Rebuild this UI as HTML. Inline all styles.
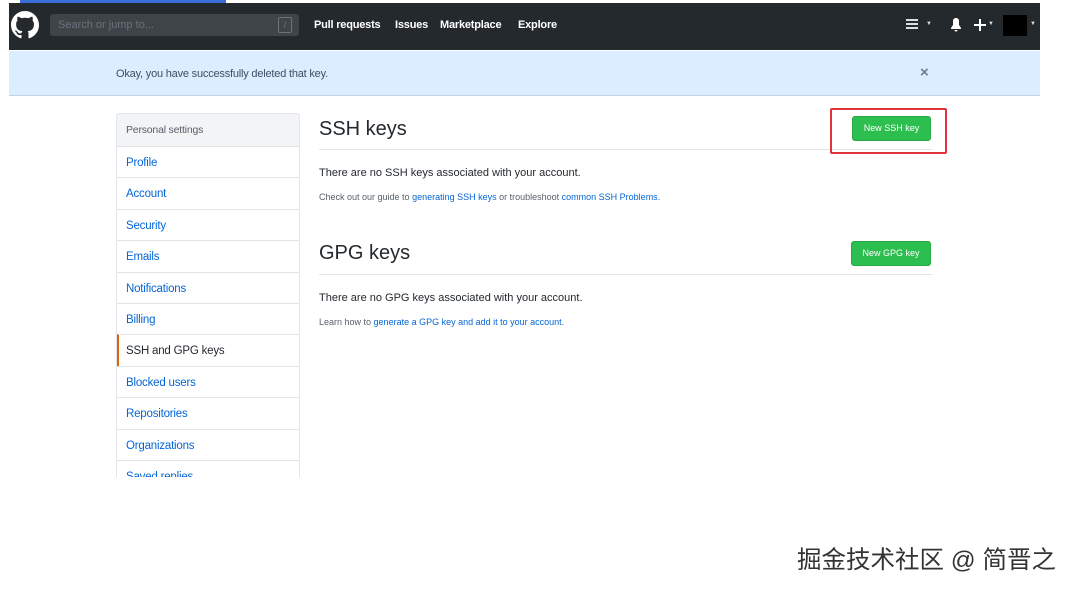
<!DOCTYPE html>
<html><head><meta charset="utf-8"><style>
*{margin:0;padding:0;box-sizing:border-box}
body{width:1076px;height:590px;background:#fff;position:relative;overflow:hidden;font-family:"Liberation Sans",sans-serif;color:#24292e}
.a{position:absolute}
.hdr{left:9px;top:3px;width:1031px;height:47px;background:#24292e}
.nav{color:#fff;font-size:11px;font-weight:bold;top:19px;letter-spacing:-0.2px}
.flash{left:9px;top:51px;width:1031px;height:45px;background:#dbedff;border-bottom:1px solid #c0d3eb}
.side{left:116px;top:113px;width:184px;height:364px;border:1px solid #e1e4e8;border-bottom:none;overflow:hidden;border-radius:3px 3px 0 0}
.side div{height:31.4px;border-top:1px solid #e1e4e8;padding:10px 0 0 9px;font-size:11.5px;color:#0366d6;letter-spacing:-0.2px}
.side .h{background:#f3f4f6;border-top:none;color:#586069;font-size:10.5px;padding-top:10px;height:32px}
.side .s{color:#24292e;border-left:2px solid #e36209;padding-left:7px}
h2{position:absolute;font-weight:normal;font-size:20px;color:#24292e}
.line{position:absolute;left:319px;width:613px;height:1px;background:#e1e4e8}
.t{position:absolute;font-size:11px;color:#24292e}
.sm{position:absolute;font-size:9px;color:#586069}
.sm b{font-weight:normal;color:#0366d6}
.btn{position:absolute;background:#2cbe4e;color:#fff;font-size:9px;border-radius:3px;text-align:center;line-height:23px;border:1px solid #28a745}
</style></head><body>
<div class="a" style="left:20px;top:0;width:206px;height:3px;background:#3a6dd8"></div>
<div class="a hdr"></div>
<svg class="a" style="left:11px;top:11px" width="28" height="28" viewBox="0 0 16 16"><path fill="#fff" d="M8 0C3.58 0 0 3.58 0 8c0 3.54 2.29 6.53 5.47 7.59.4.07.55-.17.55-.38 0-.19-.01-.82-.01-1.49-2.01.37-2.53-.49-2.69-.94-.09-.23-.48-.94-.82-1.13-.28-.15-.68-.52-.01-.53.63-.01 1.080.58 1.23.82.72 1.21 1.87.87 2.33.66.07-.52.28-.87.51-1.07-1.78-.2-3.64-.89-3.64-3.95 0-.87.31-1.59.82-2.15-.08-.2-.36-1.02.08-2.12 0 0 .67-.21 2.2.82.64-.18 1.32-.27 2-.27.68 0 1.36.09 2 .27 1.53-1.04 2.2-.82 2.2-.82.44 1.1.16 1.92.08 2.12.51.56.82 1.27.82 2.15 0 3.07-1.87 3.75-3.65 3.95.29.25.54.73.54 1.48 0 1.07-.01 1.93-.01 2.2 0 .21.15.46.55.38A8.013 8.013 0 0016 8c0-4.42-3.58-8-8-8z"/></svg>
<div class="a" style="left:50px;top:14px;width:249px;height:22px;background:#3f4448;border-radius:3px"></div>
<div class="a" style="left:58px;top:19px;font-size:11px;color:#6a737d">Search or jump to...</div>
<div class="a" style="left:278px;top:17px;width:14px;height:16px;border:1px solid #6a737d;border-radius:2px;font-size:9px;color:#6a737d;text-align:center;line-height:14px">/</div>
<div class="a nav" style="left:314px">Pull requests</div>
<div class="a nav" style="left:395px">Issues</div>
<div class="a nav" style="left:440px">Marketplace</div>
<div class="a nav" style="left:518px">Explore</div>
<div class="a" style="left:906px;top:19px;width:12px;height:10px;border-top:2px solid #ddd;border-bottom:2px solid #ddd"></div>
<div class="a" style="left:906px;top:23px;width:12px;height:2px;background:#ddd"></div>
<div class="a" style="left:926px;top:21px;color:#ddd;font-size:6px">▼</div>
<svg class="a" style="left:950px;top:18px" width="12" height="14" viewBox="0 0 12 14"><path fill="#fff" d="M6 0C4.5 0 3 1 3 3v4L1 10v1h10v-1L9 7V3C9 1 7.5 0 6 0zM4.5 12a1.5 1.5 0 003 0z"/></svg>
<svg class="a" style="left:974px;top:19px" width="12" height="12" viewBox="0 0 12 12"><path fill="#fff" d="M5 0h2v5h5v2H7v5H5V7H0V5h5z"/></svg>
<div class="a" style="left:988px;top:21px;color:#ddd;font-size:6px">▼</div>
<div class="a" style="left:1003px;top:15px;width:24px;height:21px;background:#000"></div>
<div class="a" style="left:1030px;top:21px;color:#ddd;font-size:6px">▼</div>
<div class="a flash"></div>
<div class="a" style="left:116px;top:68px;font-size:11px;color:#3d4f66;letter-spacing:-0.2px">Okay, you have successfully deleted that key.</div>
<div class="a" style="left:920px;top:64px;font-size:15px;color:#6a7c92;font-weight:bold">×</div>
<div class="a side">
<div class="h">Personal settings</div>
<div>Profile</div><div>Account</div><div>Security</div><div>Emails</div><div>Notifications</div><div>Billing</div>
<div class="s">SSH and GPG keys</div>
<div>Blocked users</div><div>Repositories</div><div>Organizations</div><div>Saved replies</div>
</div>
<h2 style="left:319px;top:118px">SSH keys</h2>
<div class="line" style="top:149px"></div>
<div class="t" style="left:319px;top:167px">There are no SSH keys associated with your account.</div>
<div class="sm" style="left:319px;top:192px">Check out our guide to <b>generating SSH keys</b> or troubleshoot <b>common SSH Problems</b>.</div>
<div class="a" style="left:830px;top:108px;width:117px;height:46px;border:2px solid #e0343c;border-radius:2px"></div>
<div class="btn" style="left:852px;top:116px;width:79px">New SSH key</div>
<h2 style="left:319px;top:242px">GPG keys</h2>
<div class="line" style="top:274px"></div>
<div class="btn" style="left:851px;top:241px;width:80px">New GPG key</div>
<div class="t" style="left:319px;top:292px">There are no GPG keys associated with your account.</div>
<div class="sm" style="left:319px;top:317px">Learn how to <b>generate a GPG key and add it to your account</b>.</div>
<div class="a" style="left:797px;top:541px;font-size:24.5px;color:#333;font-family:'Liberation Sans','Noto Sans CJK SC',sans-serif">掘金技术社区 @ 简晋之</div>
</body></html>
